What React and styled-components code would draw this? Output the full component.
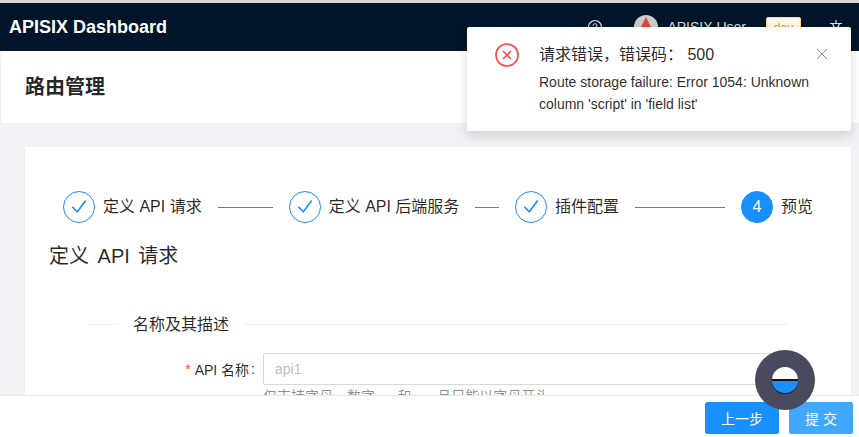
import React from 'react';
import styled, { createGlobalStyle } from 'styled-components';
import { AiOutlineQuestionCircle } from 'react-icons/ai';

const Global = createGlobalStyle`
  html, body { margin: 0; padding: 0; height: 100%; }
  body { font-family: "Liberation Sans", "Noto Sans CJK SC", sans-serif; font-size: 14px; color: rgba(0,0,0,.85); background: #f0f2f5; }
  * { box-sizing: border-box; }
`;

const Page = styled.div`
  position: relative; width: 859px; height: 437px; overflow: hidden;
  display: flex; flex-direction: column; background: #f0f2f5;
  border-top: 3px solid #d9d6d2;
`;
const Header = styled.header`
  height: 48px; flex: none; background: #001529; display: flex; align-items: center;
  padding: 0 14px 0 9px; color: #fff;
`;
const Brand = styled.div`font-size: 18px; font-weight: 700; line-height: 48px; flex: 1; color: #fff;`;
const HeaderItem = styled.div`
  display: flex; align-items: center; color: rgba(255,255,255,.85); margin-left: ${p => p.$ml || 0}px;
`;
const Avatar = styled.span`
  width: 24px; height: 24px; border-radius: 50%; background: #ccc; display: flex; align-items: center; justify-content: center; margin-right: 9px;
`;
const Tag = styled.span`
  width: 35px; height: 22px; margin-top: 2px; border: 1px solid #ffd591; background: #fff7e6; color: #fa8c16; border-radius: 2px;
  font-size: 12px; display: flex; align-items: center; justify-content: center;
`;
const Main = styled.main`flex: 1; min-height: 0; overflow: hidden; padding-left: 1px;`;
const TitleBar = styled.div`
  height: 72px; background: #fff; padding: 0 24px; display: flex; align-items: center;
`;
const PageTitle = styled.h1`margin: 0; font-size: 20px; line-height: 28px; font-weight: 600; color: rgba(0,0,0,.85);`;
const Card = styled.section`
  margin: 24px 8px 0 24px; background: #fff; padding: 44px 24px 0; height: 400px;
`;
const Steps = styled.div`display: flex; align-items: center; padding: 0 14px; height: 32px;`;
const StepIcon = styled.span`
  width: 32px; height: 32px; border-radius: 50%; flex: none; display: flex; align-items: center; justify-content: center;
  border: 1px solid #1890ff; color: ${p => p.$active ? '#fff' : '#1890ff'}; background: ${p => p.$active ? '#1890ff' : '#fff'};
  font-size: 16px; margin-right: 8px;
`;
const StepTitle = styled.span`font-size: 16px; line-height: 32px; white-space: nowrap; color: rgba(0,0,0,.85);`;
const StepLine = styled.span`height: 1px; background: #1890ff; flex: none; width: ${p => p.$w}px; margin: 0 16px;`;
const Heading = styled.h2`margin: 17px 0 0; font-size: 20px; font-weight: 400; line-height: 32px; word-spacing: 3px; color: rgba(0,0,0,.85);`;
const Divider = styled.div`
  display: flex; align-items: center; margin: 40px 39px 0 39px; font-size: 16px; line-height: 24px; height: 24px;
  &::before, &::after { content: ''; height: 1px; background: #f0f0f0; }
  &::before { width: 30px; } &::after { flex: 1; }
`;
const DividerText = styled.span`padding: 2px 15px 0; white-space: nowrap;`;
const FormRow = styled.div`display: flex; margin-top: 17px;`;
const Label = styled.label`
  width: 214px; flex: none; height: 32px; display: flex; align-items: center; justify-content: flex-end; font-size: 14px;
  white-space: pre;
  &::after { content: ':'; margin: 0 8px 0 2px; }
`;
const Required = styled.span`color: #ff4d4f; margin-right: 4px; font-family: SimSun, "Liberation Sans", sans-serif;`;
const FieldCol = styled.div`flex: none; width: 524px;`;
const Input = styled.input`
  display: block; width: 100%; height: 32px; border: 1px solid #d9d9d9; border-radius: 2px; padding: 4px 11px; font: inherit; outline: none;
  &::placeholder { color: #bfbfbf; }
`;
const Help = styled.div`font-size: 14px; line-height: 22px; color: rgba(0,0,0,.45); white-space: nowrap;`;
const Footer = styled.footer`
  height: 42px; flex: none; background: #fff; border-top: 1px solid #e8e8e8; display: flex; justify-content: flex-end; align-items: flex-start;
  padding: 6px 6px 0 0; gap: 10px;
`;
const Button = styled.button`
  height: 32px; width: ${p => p.$w}px; border: 1px solid ${p => p.$light ? '#40a9ff' : '#1890ff'}; background: ${p => p.$light ? '#40a9ff' : '#1890ff'};
  color: #fff; border-radius: 2px; font: inherit; padding: 0;
`;
const Notice = styled.div`
  position: absolute; left: 467px; top: 24px; width: 384px; height: 104px; background: #fff; border-radius: 2px;
  box-shadow: 0 4px 12px rgba(0,0,0,.15); padding: 16px 24px 16px 72px;
`;
const NoticeIcon = styled.span`position: absolute; left: 28px; top: 16px; display: flex;`;
const NoticeTitle = styled.div`font-size: 16px; line-height: 24px; margin-bottom: 4px; color: rgba(0,0,0,.85); white-space: pre;`;
const NoticeText = styled.div`font-size: 14px; line-height: 22px; width: 288px; color: rgba(0,0,0,.85);`;
const NoticeClose = styled.span`position: absolute; right: 23px; top: 21px; display: flex; color: rgba(0,0,0,.45);`;
const Fab = styled.div`
  position: absolute; left: 755px; top: 347px; width: 60px; height: 60px; border-radius: 50%; background: #4a4a5e;
  display: flex; align-items: center; justify-content: center;
`;
const Bowl = styled.span`
  width: 26px; height: 26px; border-radius: 50%; display: block;
  background: linear-gradient(#ffffff 0, #ffffff 47%, #15151f 47%, #15151f 53%, #1890ff 53%, #1890ff 100%);
  box-shadow: 0 1px 0 #15151f;
`;

const Check = () => (
  <svg width="16" height="16" viewBox="0 0 16 16" fill="none" stroke="currentColor" strokeWidth="1.6"><path d="M1.3 7.7 L6.3 12.8 L14.7 1.5" /></svg>
);

export default function App() {
  return (
    <>
      <Global />
      <Page>
        <Header>
          <Brand>APISIX Dashboard</Brand>
          <HeaderItem><AiOutlineQuestionCircle size={16} /></HeaderItem>
          <HeaderItem $ml={31}>
            <Avatar>
              <svg width="20" height="20" viewBox="0 0 20 20"><path d="M10 0 L20 20 L0 20 Z" fill="#e8433e" /></svg>
            </Avatar>
            APISIX User
          </HeaderItem>
          <HeaderItem $ml={20}><Tag>dev</Tag></HeaderItem>
          <HeaderItem $ml={28}>
            <svg width="16" height="16" viewBox="0 0 16 16" fill="none" stroke="currentColor" strokeWidth="1.2">
              <path d="M7 1v3 M1 4.5H13 M3.5 4.5c1 4 4 7 9 9 M10.5 4.5C9.5 8.5 6.5 11.5 1.5 13.5" />
            </svg>
          </HeaderItem>
        </Header>
        <Main>
          <TitleBar><PageTitle>路由管理</PageTitle></TitleBar>
          <Card>
            <Steps>
              <StepIcon><Check /></StepIcon><StepTitle>定义 API 请求</StepTitle><StepLine $w={55} />
              <StepIcon><Check /></StepIcon><StepTitle>定义 API 后端服务</StepTitle><StepLine $w={23.6} />
              <StepIcon><Check /></StepIcon><StepTitle>插件配置</StepTitle><StepLine $w={89.9} />
              <StepIcon $active>4</StepIcon><StepTitle>预览</StepTitle>
            </Steps>
            <Heading>定义 API 请求</Heading>
            <Divider><DividerText>名称及其描述</DividerText></Divider>
            <FormRow>
              <Label><Required>*</Required>API 名称</Label>
              <FieldCol>
                <Input placeholder="api1" readOnly />
                <Help>仅支持字母、数字、- 和 _，且只能以字母开头</Help>
              </FieldCol>
            </FormRow>
          </Card>
        </Main>
        <Footer>
          <Button $w={74}>上一步</Button>
          <Button $w={64} $light>提 交</Button>
        </Footer>
        <Notice>
          <NoticeIcon>
            <svg width="24" height="24" viewBox="0 0 24 24" fill="none" stroke="#ff4d4f" strokeWidth="1.7"><circle cx="12" cy="12" r="11" /><path d="M8 8 L16 16 M16 8 L8 16" /></svg>
          </NoticeIcon>
          <NoticeTitle>请求错误，错误码： 500</NoticeTitle>
          <NoticeText>Route storage failure: Error 1054: Unknown column 'script' in 'field list'</NoticeText>
          <NoticeClose>
            <svg width="12" height="12" viewBox="0 0 12 12" fill="none" stroke="currentColor" strokeWidth="1"><path d="M1 1 L11 11 M11 1 L1 11" /></svg>
          </NoticeClose>
        </Notice>
        <Fab><Bowl /></Fab>
      </Page>
    </>
  );
}
